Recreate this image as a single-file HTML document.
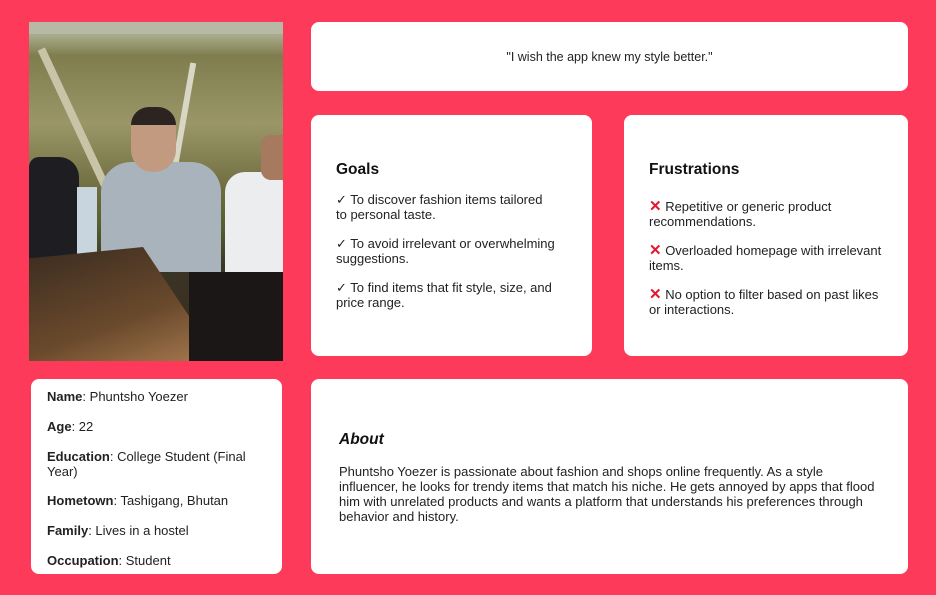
<!DOCTYPE html>
<html><head><style>
*{margin:0;padding:0;box-sizing:border-box}
body{width:936px;height:595px;background:#fe3a5b;font-family:"Liberation Sans",sans-serif;color:#222;position:relative;overflow:hidden}
.b{position:absolute;background:#fff;border-radius:8px}
h3{font-size:15.5px;font-weight:bold;color:#111}
p{font-size:13px;line-height:15px}
.photo{position:absolute;left:29px;top:22px;width:254px;height:339px;overflow:hidden;background:linear-gradient(180deg,#a8ab8a 0,#a8ab8a 4%,#7f7d4e 10%,#9a9668 30%,#6d6c3e 50%,#55602f 60%,#3a3526 72%,#3b2a1c 100%)}
.x{color:#e3172e;font-weight:bold;font-size:15px}
</style></head><body>
<div class="photo">
<div style="position:absolute;left:0;top:0;width:254px;height:12px;background:#b7b9a4"></div>
<div style="position:absolute;left:40px;top:20px;width:8px;height:150px;background:#c9c4a8;transform:rotate(-25deg)"></div>
<div style="position:absolute;left:150px;top:40px;width:6px;height:130px;background:#d8d6c4;transform:rotate(10deg)"></div>
<div style="position:absolute;left:0;top:135px;width:50px;height:110px;background:#1e1e22;border-radius:10px 20px 0 0"></div>
<div style="position:absolute;left:72px;top:140px;width:120px;height:110px;background:#a9b3bc;border-radius:30px 30px 0 0"></div>
<div style="position:absolute;left:102px;top:85px;width:45px;height:65px;background:#c29a80;border-radius:22px"></div>
<div style="position:absolute;left:102px;top:85px;width:45px;height:18px;background:#2b2420;border-radius:22px 22px 0 0"></div>
<div style="position:absolute;left:196px;top:150px;width:58px;height:110px;background:#ecedee;border-radius:20px 10px 0 0"></div>
<div style="position:absolute;left:232px;top:113px;width:22px;height:45px;background:#a57a5e;border-radius:10px 0 0 10px"></div>
<div style="position:absolute;left:48px;top:165px;width:20px;height:80px;background:#c9d5de"></div>
<div style="position:absolute;left:0;top:225px;width:190px;height:114px;background:linear-gradient(160deg,#3a2b20,#6a4a2c 60%,#a87a50);clip-path:polygon(0 10%,60% 0,100% 100%,0 100%)"></div>
<div style="position:absolute;left:160px;top:250px;width:94px;height:89px;background:#1a1716"></div>
</div>
<div class="b" style="left:311px;top:22px;width:597px;height:69px"><p style="text-align:center;margin-top:28px;font-size:12.5px">"I wish the app knew my style better."</p></div>
<div class="b" style="left:311px;top:115px;width:281px;height:241px;padding:46px 0 0 25px">
<h3>Goals</h3>
<p style="margin-top:13px">✓ To discover fashion items tailored<br>to personal taste.</p>
<p style="margin-top:14px">✓ To avoid irrelevant or overwhelming<br>suggestions.</p>
<p style="margin-top:14px">✓ To find items that fit style, size, and<br>price range.</p>
</div>
<div class="b" style="left:624px;top:115px;width:284px;height:241px;padding:46px 0 0 25px">
<h3>Frustrations</h3>
<p style="margin-top:20px"><span class="x">✕</span> Repetitive or generic product<br>recommendations.</p>
<p style="margin-top:14px"><span class="x">✕</span> Overloaded homepage with irrelevant<br>items.</p>
<p style="margin-top:14px"><span class="x">✕</span> No option to filter based on past likes<br>or interactions.</p>
</div>
<div class="b" style="left:31px;top:379px;width:251px;height:195px;padding:10px 0 0 16px">
<p><b>Name</b>: Phuntsho Yoezer</p>
<p style="margin-top:15px"><b>Age</b>: 22</p>
<p style="margin-top:15px"><b>Education</b>: College Student (Final<br>Year)</p>
<p style="margin-top:14px"><b>Hometown</b>: Tashigang, Bhutan</p>
<p style="margin-top:15px"><b>Family</b>: Lives in a hostel</p>
<p style="margin-top:15px"><b>Occupation</b>: Student</p>
</div>
<div class="b" style="left:311px;top:379px;width:597px;height:195px;padding:52px 0 0 28px">
<h3 style="font-style:italic">About</h3>
<p style="margin-top:15px">Phuntsho Yoezer is passionate about fashion and shops online frequently. As a style<br>influencer, he looks for trendy items that match his niche. He gets annoyed by apps that flood<br>him with unrelated products and wants a platform that understands his preferences through<br>behavior and history.</p>
</div>
</body></html>
